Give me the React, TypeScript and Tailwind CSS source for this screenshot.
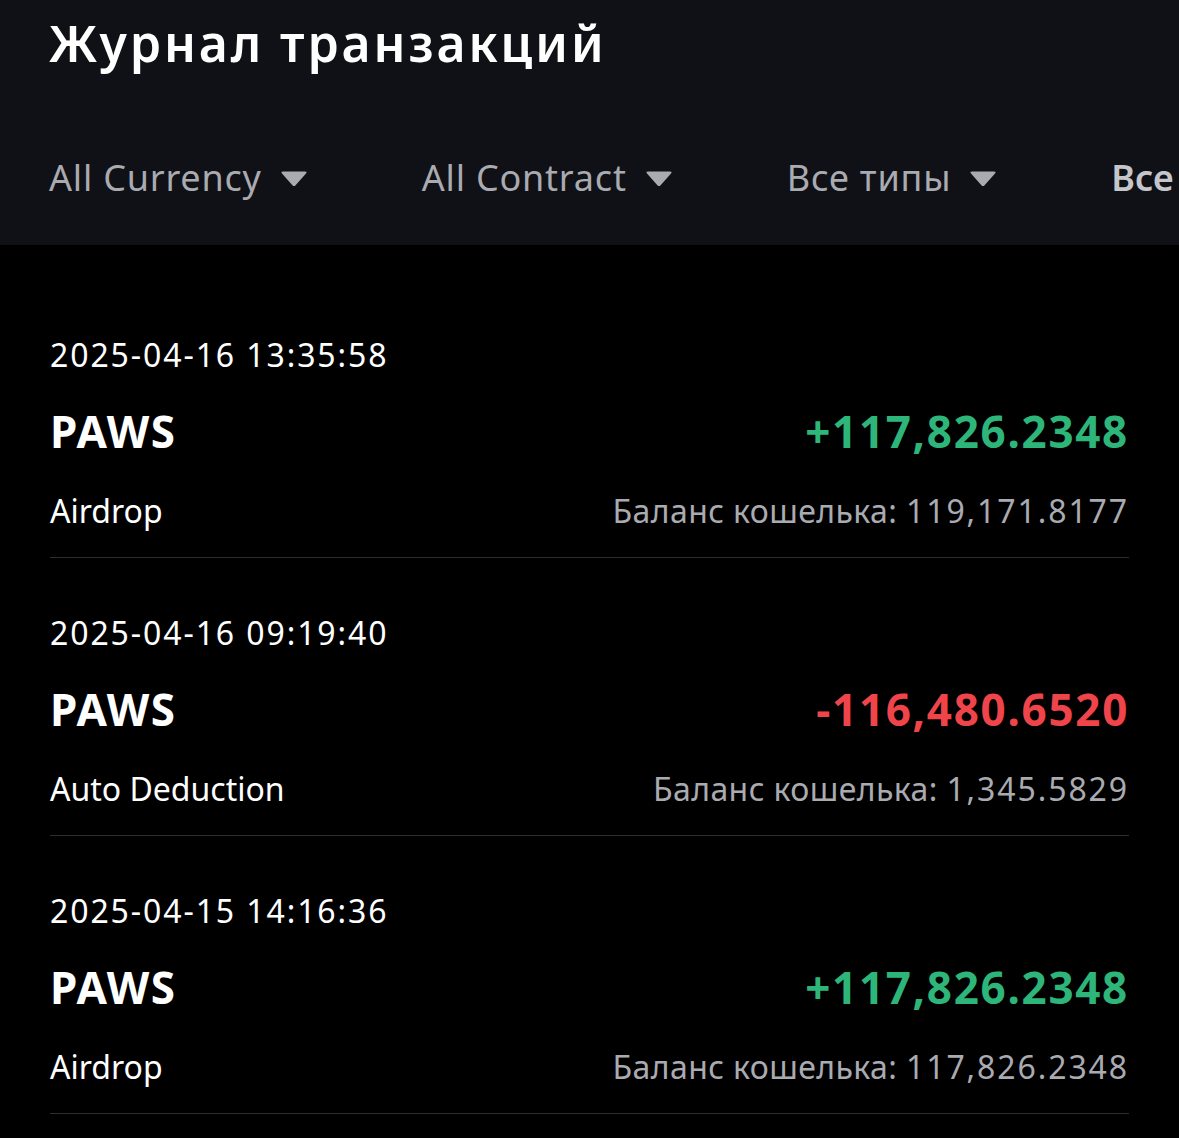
import React from 'react';

interface Tx {
  time: string;
  coin: string;
  amount: string;
  positive: boolean;
  kind: string;
  balance: string;
}

const txs: Tx[] = [
  { time: '2025-04-16 13:35:58', coin: 'PAWS', amount: '+117,826.2348', positive: true, kind: 'Airdrop', balance: '119,171.8177' },
  { time: '2025-04-16 09:19:40', coin: 'PAWS', amount: '-116,480.6520', positive: false, kind: 'Auto Deduction', balance: '1,345.5829' },
  { time: '2025-04-15 14:16:36', coin: 'PAWS', amount: '+117,826.2348', positive: true, kind: 'Airdrop', balance: '117,826.2348' },
];

const filters = ['All Currency', 'All Contract', 'Все типы'];

function Caret() {
  return (
    <svg width="28" height="17" viewBox="0 0 28 17" className="shrink-0">
      <path d="M3 1.5 H25 Q27.5 1.5 26 3.6 L15.6 15.2 Q14 17 12.4 15.2 L2 3.6 Q0.5 1.5 3 1.5 Z" fill="#a9abb1" />
    </svg>
  );
}

export default function App() {
  return (
    <div className="w-[1179px] h-[1138px] overflow-hidden bg-black text-white font-['Noto_Sans',sans-serif]">
      {/* Header */}
      <div className="bg-[#101116] h-[245px] flex flex-col">
        <h1 className="pl-[49px] h-[90px] flex items-center -mt-[2px] text-[50px] font-semibold leading-none tracking-[2.9px] whitespace-nowrap">
          Журнал транзакций
        </h1>
        <div className="flex items-center gap-[114px] pl-[49px] mt-[68px] whitespace-nowrap">
          {filters.map((f) => (
            <div key={f} className="flex items-center gap-[18px] shrink-0">
              <span className="text-[36px] leading-[44px] text-[#a9abb1] tracking-[0.8px]">{f}</span>
              <Caret />
            </div>
          ))}
          <span className="text-[36px] leading-[44px] text-[#c4c6cb] font-semibold shrink-0">Все</span>
        </div>
      </div>

      {/* List */}
      <div className="px-[50px] pt-[35px]">
        {txs.map((t, i) => (
          <div key={i} className="pt-[55px] pb-[26px] border-b border-[#2c2d31]">
            <div className="h-[40px] flex items-center text-[32px] leading-none tracking-[1.9px]">{t.time}</div>
            <div className="mt-[32px] h-[48px] flex items-center justify-between">
              <span className="text-[44px] font-bold leading-none tracking-[1.5px]">{t.coin}</span>
              <span className={`text-[44px] font-bold leading-none tracking-[1.7px] ${t.positive ? 'text-[#2db57a]' : 'text-[#ef454a]'}`}>
                {t.amount}
              </span>
            </div>
            <div className="mt-[36px] h-[40px] flex items-center justify-between text-[32px] leading-none">
              <span className="text-white">{t.kind}</span>
              <span className="text-[#a9abb1]">
                <span className="tracking-[0.4px]">Баланс кошелька: </span>
                <span className="tracking-[1.9px]">{t.balance}</span>
              </span>
            </div>
          </div>
        ))}
      </div>
    </div>
  );
}
